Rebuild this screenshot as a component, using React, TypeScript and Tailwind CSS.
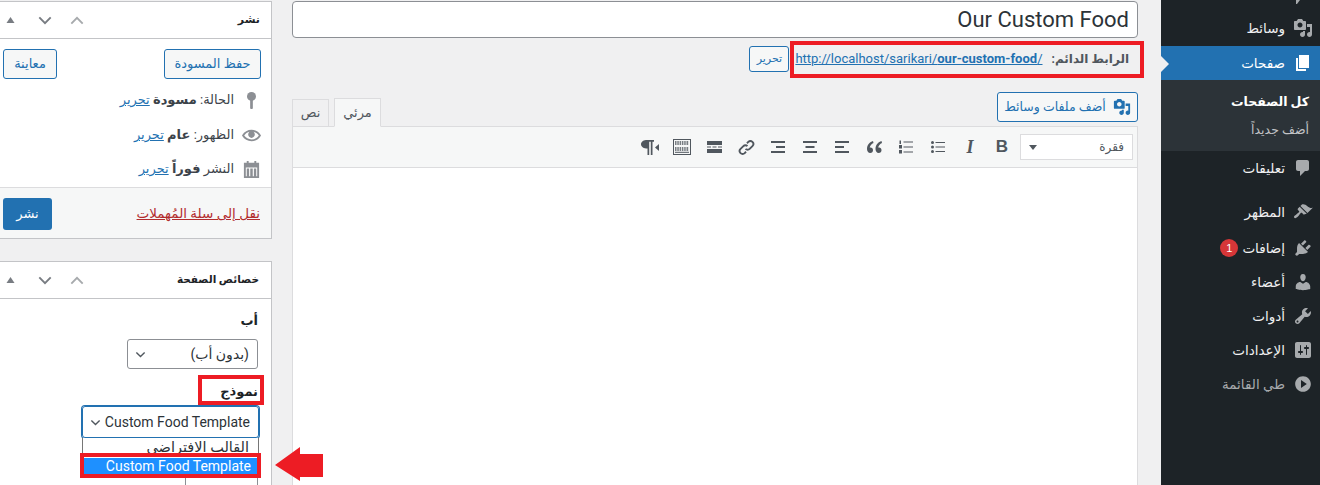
// App.tsx
const FONT = "font-['Roboto','DejaVu_Sans',sans-serif]"

const ICONS: Record<string, string> = {
  media: 'M13 11V4c0-.55-.45-1-1-1h-1.67L9 1H5L3.67 3H2c-.55 0-1 .45-1 1v7c0 .55.45 1 1 1h10c.55 0 1-.45 1-1zM7 4.5c1.38 0 2.5 1.12 2.5 2.5S8.38 9.5 7 9.5 4.5 8.38 4.5 7 5.62 4.5 7 4.5zM14 6h5v10.5c0 1.38-1.12 2.5-2.5 2.5S14 17.88 14 16.5s1.12-2.5 2.5-2.5c.17 0 .34.02.5.05V9h-3V6zm-4 8.05V13h2v3.5c0 1.38-1.12 2.5-2.5 2.5S7 17.88 7 16.5 8.12 14 9.5 14c.17 0 .34.02.5.05z',
  pages: 'M6 15V2h10v13H6zm-1 1h8v2H3V5h2v11z',
  comments: 'M5 2h9c1.1 0 2 .9 2 2v7c0 1.1-.9 2-2 2h-2l-5 5v-5H5c-1.1 0-2-.9-2-2V4c0-1.1.9-2 2-2z',
  appearance: 'M14.48 11.06L7.41 3.99l1.5-1.5c.5-.56 2.3-.47 3.51.32 1.21.8 1.43 1.28 2.91 2.1 1.18.64 2.45 1.26 4.45.85zm-.71.71L6.7 4.7 4.93 6.47c-.39.39-.39 1.02 0 1.41l1.06 1.06c.39.39.39 1.03 0 1.42-.6.6-1.43 1.11-2.21 1.69-.35.26-.7.53-1.01.84C1.43 13.23.4 14.89 1.3 15.8c.9.9 2.57-.13 3.91-1.47.31-.31.58-.66.85-1.01.57-.78 1.08-1.61 1.69-2.21.39-.39 1.02-.39 1.41 0l1.06 1.06c.39.39 1.02.39 1.41 0z',
  plugins: 'M13.11 4.36L9.87 7.6 8 5.73l3.24-3.24c.35-.34 1.05-.2 1.56.32.52.51.66 1.21.31 1.55zm-8 1.77l.91-1.12 9.01 9.01-1.19.84c-.71.71-2.63 1.16-3.82 1.16H6.14L4.9 17.26c-.59.59-1.54.59-2.12 0-.59-.58-.59-1.53 0-2.12l1.24-1.24v-3.88c0-1.13.4-3.19 1.09-3.89zm7.26 3.97l3.24-3.24c.34-.35 1.04-.21 1.55.31.52.51.66 1.21.31 1.55l-3.24 3.25z',
  users: 'M10 9.25c-2.27 0-2.73-3.44-2.73-3.44C7 4.02 7.82 2 9.97 2c2.16 0 2.98 2.02 2.71 3.81 0 0-.41 3.44-2.68 3.44zm0 2.57L12.72 10c2.39 0 4.52 2.33 4.52 4.53v2.49s-3.65 1.13-7.24 1.13c-3.65 0-7.24-1.13-7.24-1.13v-2.49c0-2.25 1.94-4.48 4.47-4.48z',
  tools: 'M16.68 9.77c-1.34 1.34-3.3 1.67-4.95.99l-5.41 6.52c-.99.99-2.59.99-3.58 0s-.99-2.59 0-3.57l6.52-5.42c-.68-1.65-.35-3.61.99-4.95 1.28-1.28 3.12-1.62 4.72-1.06l-2.89 2.89 2.82 2.82 2.86-2.87c.53 1.58.18 3.39-1.08 4.65zM3.81 16.21c.4.39 1.04.39 1.43 0 .4-.4.4-1.04 0-1.43-.39-.4-1.03-.4-1.43 0-.39.39-.39 1.03 0 1.43z',
  settings: 'M18 16V4c0-1.1-.9-2-2-2H4c-1.1 0-2 .9-2 2v12c0 1.1.9 2 2 2h12c1.1 0 2-.9 2-2zM8 11h1c.55 0 1 .45 1 1s-.45 1-1 1H8v1.5c0 .28-.22.5-.5.5s-.5-.22-.5-.5V13H6c-.55 0-1-.45-1-1s.45-1 1-1h1V5.5c0-.28.22-.5.5-.5s.5.22.5.5V11zm5-2h-1c-.55 0-1-.45-1-1s.45-1 1-1h1V5.5c0-.28.22-.5.5-.5s.5.22.5.5V7h1c.55 0 1 .45 1 1s-.45 1-1 1h-1v5.5c0 .28-.22.5-.5.5s-.5-.22-.5-.5V9z',
  collapse: 'M10 2.16c4.33 0 7.84 3.51 7.84 7.84s-3.51 7.84-7.84 7.84S2.16 14.33 2.16 10 5.71 2.16 10 2.16zm2 11.72V6.12L6.18 9.97z',
  eye: 'M19.7 9.4C17.7 6 14 3.9 10 3.9S2.3 6 .3 9.4L0 10l.3.6c2 3.4 5.7 5.5 9.7 5.5s7.7-2.1 9.7-5.5l.3-.6-.3-.6zM10 14.1c-3.1 0-6-1.6-7.7-4.1C3.6 8 5.7 6.6 8 6.1c-.9.6-1.5 1.7-1.5 2.9 0 1.9 1.6 3.5 3.5 3.5s3.5-1.6 3.5-3.5c0-1.2-.6-2.3-1.5-2.9 2.3.5 4.4 1.9 5.7 3.9-1.7 2.5-4.6 4.1-7.7 4.1z',
}

function Dash({ name, className }: { name: string; className?: string }) {
  return (
    <svg viewBox="0 0 20 20" className={className} fill="currentColor">
      <path d={ICONS[name]} />
    </svg>
  )
}

function BoxControls() {
  return (
    <div className="flex items-center text-[#50575e]">
      <svg viewBox="0 0 8 6" className="ml-[6px] w-[9px] h-[6px]" fill="#787c82"><path d="M4 0l4 6H0z" /></svg>
      <svg viewBox="0 0 16 10" className="ml-[23px] w-[14px] h-[9px]" fill="none" stroke="#787c82" strokeWidth="2.2"><path d="M1.5 1.5L8 8l6.5-6.5" /></svg>
      <svg viewBox="0 0 16 10" className="ml-[18px] w-[14px] h-[9px]" fill="none" stroke="#a7aaad" strokeWidth="2.2"><path d="M1.5 8.5L8 2l6.5 6.5" /></svg>
    </div>
  )
}

function MetaRow({ label, value, icon, className }: { label: string; value: string; icon: React.ReactNode; className?: string }) {
  return (
    <div dir="rtl" className={`flex items-center pr-[10px] text-[13px] text-[#3c434a] ${className ?? ''}`}>
      <span className="w-[20px] flex justify-center text-[#8c8f94]">{icon}</span>
      <span className="mr-[7px]">{label} <b>{value}</b> <a className="text-[#2271b1] underline">تحرير</a></span>
    </div>
  )
}

function PublishBox() {
  return (
    <div className="h-[238px] mt-[1px] bg-white border-y border-r border-[#c3c4c7] flex flex-col">
      <div className="h-[37px] flex items-center justify-between border-b border-[#c3c4c7] pr-[11px]">
        <BoxControls />
        <span className="text-[11px] font-bold text-[#1d2327]">نشر</span>
      </div>
      <div className="flex justify-between pt-[10px] pl-[3px] pr-[10px]">
        <button className="w-[54px] h-[30px] border border-[#2271b1] rounded-[3px] bg-[#f6f7f7] text-[13px] text-[#2271b1]">معاينة</button>
        <button className="w-[97px] h-[30px] border border-[#2271b1] rounded-[3px] bg-[#f6f7f7] text-[13px] text-[#2271b1]">حفظ المسودة</button>
      </div>
      <MetaRow
        className="mt-[11px] h-[20px]"
        label="الحالة:"
        value="مسودة"
        icon={<svg viewBox="0 0 12 20" className="w-[11px] h-[18px]" fill="currentColor"><circle cx="6" cy="6" r="5" /><rect x="4.5" y="9" width="3" height="11" rx="1" /></svg>}
      />
      <MetaRow className="mt-[15px] h-[20px]" label="الظهور:" value="عام" icon={<Dash name="eye" className="w-[19px] h-[19px]" />} />
      <MetaRow
        className="mt-[14px] h-[20px]"
        label="النشر"
        value="فوراً"
        icon={
          <svg viewBox="0 0 20 20" className="w-[19px] h-[19px]" fill="currentColor">
            <path d="M2 3h3V1h2v2h6V1h2v2h3v16H2V3zm2 5v9h12V8H4zm1 1h2.500v8H5V9zm3.700 0h2.600v8H8.700V9zm3.800 0H15v8h-2.500V9z" />
          </svg>
        }
      />
      <div className="mt-auto h-[51px] bg-[#f6f7f7] border-t border-[#dcdcde] flex items-start justify-between pt-[10px] pl-[3px] pr-[11px]">
        <button className="w-[49px] h-[32px] bg-[#2271b1] rounded-[3px] text-white text-[13px]">نشر</button>
        <a className="mt-[5px] text-[13.5px] text-[#b32d2e] underline">نقل إلى سلة المُهملات</a>
      </div>
    </div>
  )
}

function AttributesBox() {
  return (
    <div className="mt-[22px] h-[230px] bg-white border-t border-r border-[#c3c4c7]">
      <div className="h-[37px] flex items-center justify-between border-b border-[#c3c4c7] pr-[12px]">
        <BoxControls />
        <span className="text-[10.5px] font-bold text-[#1d2327]">خصائص الصفحة</span>
      </div>
      <div dir="rtl" className="pr-[13px] pt-[12px]">
        <div className="h-[20px] text-[13px] font-bold text-[#1d2327] leading-[20px]">أب</div>
        <div className="mt-[8px] w-[131px] h-[30px] border border-[#8c8f94] rounded-[3px] flex items-center justify-between pr-[8px] pl-[7px] text-[14px] text-[#2c3338]">
          <span>(بدون أب)</span>
          <svg viewBox="0 0 16 10" className="w-[11px] h-[7px]" fill="none" stroke="#50575e" strokeWidth="2"><path d="M2 2l6 6 6-6" /></svg>
        </div>
        <div className="mt-[13px] h-[20px] text-[13px] font-bold text-[#1d2327] leading-[20px]">نموذج</div>
        <div className="mt-[4px] -mr-[1px] w-[177px] h-[32px] border border-[#2271b1] rounded-[3px] flex items-center justify-between pr-[8px] pl-[7px] text-[14px] text-[#2c3338] shadow-[0_0_0_1px_#2271b1]">
          <span className="whitespace-nowrap">Custom Food Template</span>
          <svg viewBox="0 0 16 10" className="w-[11px] h-[7px]" fill="none" stroke="#50575e" strokeWidth="2"><path d="M2 2l6 6 6-6" /></svg>
        </div>
        <div className="-mr-[1px] w-[177px] bg-white border-x border-[#767676] text-[14px] text-[#2c3338] leading-[17px]">
          <div className="h-[20px] pr-[9px] pt-[1px] text-[14.5px] whitespace-nowrap overflow-hidden">القالب الافتراضي</div>
          <div className="h-[16px] pr-[7px] leading-[16px] bg-[#1e90ff] text-white whitespace-nowrap">Custom Food Template</div>
        </div>
        <div className="w-[73px] h-[12px] bg-white border-x border-[#8c8f94]" />
      </div>
    </div>
  )
}

function Tool({ children }: { children: React.ReactNode }) {
  return <div className="w-[32px] h-[24px] flex items-center justify-center text-[#50575e]">{children}</div>
}

function Toolbar() {
  return (
    <div dir="rtl" className="h-[41px] bg-[#f6f7f7] border-b border-[#dcdcde] flex items-center pr-[4px]">
      <div className="ml-[2px] w-[113px] h-[26px] border border-[#dcdcde] bg-white flex items-center justify-between pr-[8px] pl-[8px] text-[12px] text-[#50575e]">
        <span>فقرة</span>
        <svg viewBox="0 0 8 5" className="w-[8px] h-[5px]" fill="#50575e"><path d="M0 0h8L4 5z" /></svg>
      </div>
      <Tool><span dir="ltr" className="text-[17px] font-bold font-['Liberation_Sans',sans-serif]">B</span></Tool>
      <Tool><span dir="ltr" className="text-[18px] font-bold italic font-['Liberation_Serif',serif]">I</span></Tool>
      <Tool>
        <svg viewBox="0 0 14 12" className="w-[14px] h-[12px]" fill="#50575e">
          <circle cx="1.5" cy="1.5" r="1.5" /><circle cx="1.5" cy="6" r="1.5" /><circle cx="1.5" cy="10.5" r="1.5" />
          <rect x="4.5" y="1" width="9.5" height="1" /><rect x="4.5" y="5.5" width="9.5" height="1" /><rect x="4.5" y="10" width="9.5" height="1" />
        </svg>
      </Tool>
      <Tool>
        <svg viewBox="0 0 14 14" className="w-[14px] h-[14px]" fill="#50575e">
          <rect x="0.5" y="0.5" width="1.5" height="3.5" /><rect x="0" y="5" width="3" height="3.5" /><rect x="0" y="10" width="3" height="3.5" />
          <rect x="4.5" y="1.5" width="9.5" height="1" /><rect x="4.5" y="6.5" width="9.5" height="1" /><rect x="4.5" y="11.5" width="9.5" height="1" />
        </svg>
      </Tool>
      <Tool>
        <svg viewBox="0 0 15 12" className="w-[15px] h-[12px]" fill="#50575e">
          <path d="M6 0C3 1 0 3.500 0 8c0 2.300 1.300 4 3.200 4C5 12 6 10.800 6 9.200 6 7.600 5 6.500 3.500 6.500c-.4 0-.7.1-.8.100C3 4.500 4.500 3 6.500 2zM14.500 0c-3 1-6 3.500-6 8 0 2.300 1.300 4 3.200 4 1.800 0 2.800-1.200 2.800-2.800 0-1.600-1-2.700-2.500-2.700-.4 0-.7.100-.8.100.300-2.100 1.800-3.600 3.800-4.600z" />
        </svg>
      </Tool>
      <Tool><svg viewBox="0 0 14 14" className="w-[14px] h-[14px]" fill="#50575e"><rect y="1" width="14" height="2" /><rect y="6" width="9" height="2" /><rect y="11" width="14" height="2" /></svg></Tool>
      <Tool><svg viewBox="0 0 14 14" className="w-[14px] h-[14px]" fill="#50575e"><rect y="1" width="14" height="2" /><rect x="2.500" y="6" width="9" height="2" /><rect y="11" width="14" height="2" /></svg></Tool>
      <Tool><svg viewBox="0 0 14 14" className="w-[14px] h-[14px]" fill="#50575e"><rect y="1" width="14" height="2" /><rect x="5" y="6" width="9" height="2" /><rect y="11" width="14" height="2" /></svg></Tool>
      <Tool>
        <svg viewBox="0 0 18 18" className="w-[17px] h-[17px]" fill="none" stroke="#50575e" strokeWidth="2">
          <path d="M8 10.500a3 3 0 0 0 4.300 0l3-3a3.100 3.100 0 0 0-4.400-4.400L9.500 4.500" />
          <path d="M10 7.500a3 3 0 0 0-4.300 0l-3 3a3.100 3.100 0 0 0 4.400 4.400l1.400-1.400" />
        </svg>
      </Tool>
      <Tool><svg viewBox="0 0 15 12" className="w-[15px] h-[12px]" fill="#50575e"><rect width="15" height="4" /><rect y="5.500" width="4" height="1" /><rect x="5.500" y="5.500" width="4" height="1" /><rect x="11" y="5.500" width="4" height="1" /><rect y="8" width="15" height="4" /></svg></Tool>
      <Tool>
        <svg viewBox="0 0 18 16" className="w-[18px] h-[16px]" fill="none" stroke="#50575e">
          <rect x="0.500" y="0.500" width="17" height="15" />
          <path d="M2 3h14M2 5h14M2 9h14M2 11h14" strokeDasharray="1.500 .8" strokeWidth="1.500" />
          <path d="M2 13.300h14" strokeWidth="1" />
        </svg>
      </Tool>
      <Tool>
        <svg viewBox="0 0 18 15" className="w-[18px] h-[15px]" fill="#50575e">
          <path d="M6 0h7v1.800h-1.500V15H9.800V1.800H8.200V15H6.500V8.500C3 8.500 0 7 0 4.200 0 1.500 3 0 6 0z" /><path d="M18 4v7l-4-3.500z" />
        </svg>
      </Tool>
    </div>
  )
}

function EditorColumn() {
  return (
    <div className="w-[846px] ml-[20px] shrink-0 flex flex-col">
      <div className="mt-[1px] h-[37px] bg-white border border-[#8c8f94] rounded-[4px] flex items-center justify-end pr-[8px] text-[22px] text-[#2c3338]">
        Our Custom Food
      </div>
      <div dir="rtl" className="mt-[8px] h-[26px] flex items-center pr-[9px] text-[13px]">
        <b className="text-[12px] text-[#50575e]">الرابط الدائم:</b>
        <a dir="ltr" className="mr-[9px] text-[#2271b1] underline">http://localhost/sarikari/<b>our-custom-food</b>/</a>
        <button className="mr-[6px] w-[40px] h-[26px] border border-[#2271b1] rounded-[3px] bg-[#f6f7f7] text-[11px] text-[#2271b1]">تحرير</button>
      </div>
      <div dir="rtl" className="mt-[20px] flex">
        <button className="w-[141px] h-[30px] border border-[#2271b1] rounded-[3px] bg-[#f6f7f7] flex items-center justify-center gap-[7px] text-[12.5px] text-[#2271b1]">
          <Dash name="media" className="w-[18px] h-[18px]" />
          <span>أضف ملفات وسائط</span>
        </button>
      </div>
      <div className="-mt-[24px] h-[29px] flex items-end border-b border-[#dcdcde]">
        <div className="w-[37px] h-[28px] -mb-px bg-[#f0f0f1] border border-[#dcdcde] flex items-center justify-center text-[13px] text-[#50575e]">نص</div>
        <div className="ml-[5px] w-[47px] h-[29px] -mb-px bg-[#f6f7f7] border border-[#dcdcde] border-b-[#f6f7f7] flex items-center justify-center text-[13px] text-[#50575e]">مرئي</div>
      </div>
      <div className="flex-1 bg-white border-x border-[#dcdcde]">
        <Toolbar />
      </div>
    </div>
  )
}

function MenuItem({ icon, label, className, flip, muted, children }: { icon: string; label: string; className?: string; flip?: boolean; muted?: boolean; children?: React.ReactNode }) {
  return (
    <div className={`h-[34px] flex items-center pr-[7px] ${className ?? ''}`}>
      <span className="w-[20px] flex justify-center text-[#a7aaad]">
        <Dash name={icon} className={`w-[20px] h-[20px] ${flip ? '-scale-x-100' : ''}`} />
      </span>
      <span className={`mr-[8px] text-[13.5px] ${muted ? 'text-[#a7aaad]' : 'text-[#f0f0f1]'}`}>{label}</span>
      {children}
    </div>
  )
}

function Sidebar() {
  return (
    <div dir="rtl" className="w-[159px] ml-[23px] shrink-0 bg-[#1d2327]">
      {/* bottom of the item above, cut off by the crop */}
      <div className="h-[4px] pr-[17px]">
        <svg viewBox="0 0 8 4" className="w-[8px] h-[4px]" fill="#a7aaad"><path d="M1 0h4L2 4H1z" /></svg>
      </div>
      <MenuItem icon="media" label="وسائط" className="mt-[7px]" />
      <div className="relative mt-[1px] h-[34px] bg-[#2271b1] flex items-center pr-[7px] text-white">
        <span className="w-[20px] flex justify-center"><Dash name="pages" className="w-[20px] h-[20px]" /></span>
        <span className="mr-[8px] text-[13.5px]">صفحات</span>
        <span className="absolute left-0 top-[10px] w-0 h-0 border-y-[8px] border-y-transparent border-l-[8px] border-l-[#f0f0f1]" />
      </div>
      <div className="h-[71px] bg-[#2c3338] pr-[11px] pt-[10px] text-[12.5px]">
        <div className="h-[24px] leading-[24px] font-bold text-white">كل الصفحات</div>
        <div className="mt-[4px] h-[24px] leading-[24px] text-[#c3c4c7]">أضف جديداً</div>
      </div>
      <MenuItem icon="comments" label="تعليقات" />
      <MenuItem icon="appearance" label="المظهر" className="mt-[10px]" />
      <MenuItem icon="plugins" label="إضافات" className="mt-[2px]">
        <span className="mr-[4px] w-[18px] h-[18px] rounded-full bg-[#d63638] text-white text-[11px] font-['Liberation_Sans',sans-serif] flex items-center justify-center">1</span>
      </MenuItem>
      <MenuItem icon="users" label="أعضاء" />
      <MenuItem icon="tools" label="أدوات" />
      <MenuItem icon="settings" label="الإعدادات" />
      <MenuItem icon="collapse" label="طي القائمة" flip muted />
    </div>
  )
}

export default function App() {
  return (
    <div className={`relative flex h-[485px] w-[1320px] overflow-hidden bg-[#f0f0f1] ${FONT}`}>
      <div className="w-[272px] shrink-0">
        <PublishBox />
        <AttributesBox />
      </div>
      <EditorColumn />
      <Sidebar />

      {/* annotations on top of the screenshot */}
      <div className="absolute left-[790px] top-[41px] w-[354px] h-[37px] border-[4px] border-[#ed1c24]" />
      <div className="absolute left-[198px] top-[375px] w-[66px] h-[30px] border-[4px] border-[#ed1c24]" />
      <div className="absolute left-[80px] top-[453px] w-[181px] h-[25px] border-[4px] border-[#ed1c24]" />
      <svg viewBox="0 0 48 34" className="absolute left-[275px] top-[447px] w-[48px] h-[34px]" fill="#ed1c24">
        <path d="M0 18L25 0v7h23v23H25v4z" />
      </svg>
    </div>
  )
}
